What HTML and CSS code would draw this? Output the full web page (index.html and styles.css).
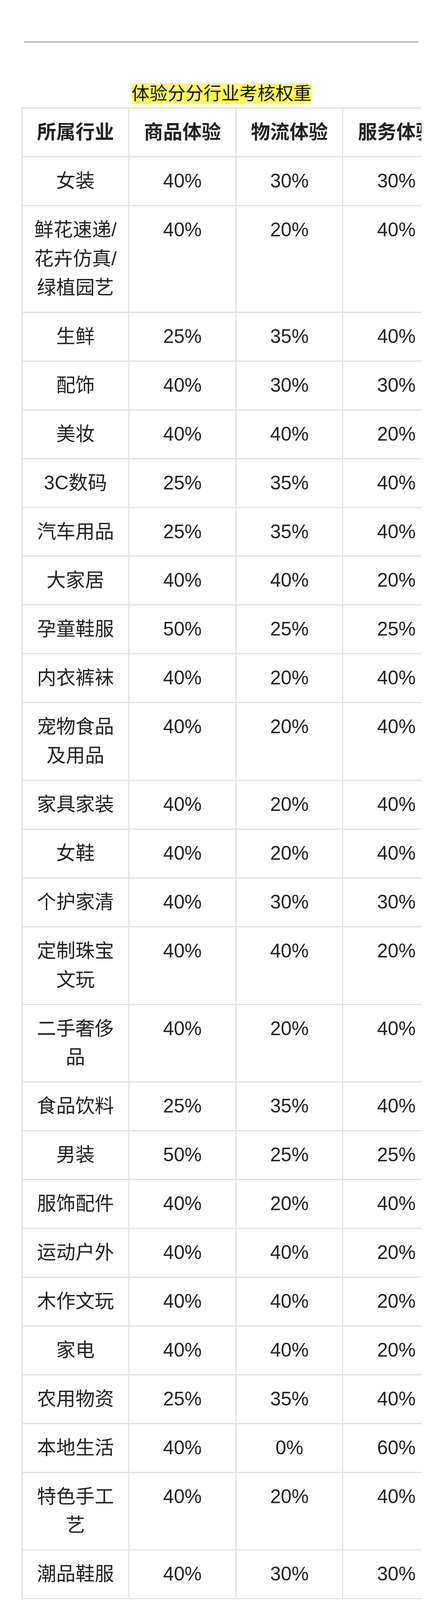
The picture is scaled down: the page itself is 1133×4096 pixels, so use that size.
FILE: index.html
```html
<!DOCTYPE html>
<html lang="zh-CN">
<head>
<meta charset="utf-8">
<title>体验分分行业考核权重</title>
<link rel="stylesheet" href="styles.css">
</head>
<body>
<div class="page">
  <div class="divider"></div>
  <div class="title"><span class="title-mark">体验分分行业考核权重</span></div>
  <div class="table-wrap">
    <table class="weights">
      <thead>
        <tr><th>所属行业</th><th>商品体验</th><th>物流体验</th><th>服务体验</th></tr>
      </thead>
      <tbody>
        <tr><td>女装</td><td>40%</td><td>30%</td><td>30%</td></tr>
        <tr><td>鲜花速递/花卉仿真/绿植园艺</td><td>40%</td><td>20%</td><td>40%</td></tr>
        <tr><td>生鲜</td><td>25%</td><td>35%</td><td>40%</td></tr>
        <tr><td>配饰</td><td>40%</td><td>30%</td><td>30%</td></tr>
        <tr><td>美妆</td><td>40%</td><td>40%</td><td>20%</td></tr>
        <tr><td>3C数码</td><td>25%</td><td>35%</td><td>40%</td></tr>
        <tr><td>汽车用品</td><td>25%</td><td>35%</td><td>40%</td></tr>
        <tr><td>大家居</td><td>40%</td><td>40%</td><td>20%</td></tr>
        <tr><td>孕童鞋服</td><td>50%</td><td>25%</td><td>25%</td></tr>
        <tr><td>内衣裤袜</td><td>40%</td><td>20%</td><td>40%</td></tr>
        <tr><td>宠物食品及用品</td><td>40%</td><td>20%</td><td>40%</td></tr>
        <tr><td>家具家装</td><td>40%</td><td>20%</td><td>40%</td></tr>
        <tr><td>女鞋</td><td>40%</td><td>20%</td><td>40%</td></tr>
        <tr><td>个护家清</td><td>40%</td><td>30%</td><td>30%</td></tr>
        <tr><td>定制珠宝文玩</td><td>40%</td><td>40%</td><td>20%</td></tr>
        <tr><td>二手奢侈品</td><td>40%</td><td>20%</td><td>40%</td></tr>
        <tr><td>食品饮料</td><td>25%</td><td>35%</td><td>40%</td></tr>
        <tr><td>男装</td><td>50%</td><td>25%</td><td>25%</td></tr>
        <tr><td>服饰配件</td><td>40%</td><td>20%</td><td>40%</td></tr>
        <tr><td>运动户外</td><td>40%</td><td>40%</td><td>20%</td></tr>
        <tr><td>木作文玩</td><td>40%</td><td>40%</td><td>20%</td></tr>
        <tr><td>家电</td><td>40%</td><td>40%</td><td>20%</td></tr>
        <tr><td>农用物资</td><td>25%</td><td>35%</td><td>40%</td></tr>
        <tr><td>本地生活</td><td>40%</td><td>0%</td><td>60%</td></tr>
        <tr><td>特色手工艺</td><td>40%</td><td>20%</td><td>40%</td></tr>
        <tr><td>潮品鞋服</td><td>40%</td><td>30%</td><td>30%</td></tr>
      </tbody>
    </table>
  </div>
</div>
</body>
</html>
```
FILE: styles.css
```css
html, body {
  margin: 0;
  padding: 0;
  background: #ffffff;
}

body {
  font-family: "Liberation Sans", "Noto Sans CJK SC", sans-serif;
  color: #222222;
}

.page {
  padding-top: 107px;
}

.divider {
  height: 1px;
  margin: 0 63px 0 62px;
  background: #111111;
  box-shadow: 0 10px 14px rgba(0, 0, 0, 0.018);
}

.title {
  margin-top: 104.5px;
  text-align: center;
  font-size: 46px;
  line-height: 53.3px;
  height: 53.3px;
}

.title-mark {
  display: inline-block;
  vertical-align: top;
  height: 53.3px;
  line-height: 53.3px;
  background: #fffc5b;
  color: #111111;
}

.table-wrap {
  margin-top: 9.6px;
  margin-left: 54.7px;
  width: 1023px;
  overflow: hidden;
}

.weights {
  border-collapse: collapse;
  table-layout: fixed;
  width: 1097.4px;
}

.weights th,
.weights td {
  border: 3px solid #e1e1e4;
  padding: 23px 22px 25px;
  font-size: 49.25px;
  line-height: 73.9px;
  text-align: center;
  vertical-align: top;
  color: #222222;
}

.weights th {
  font-weight: 600;
}

.weights td {
  font-weight: 400;
}
```
